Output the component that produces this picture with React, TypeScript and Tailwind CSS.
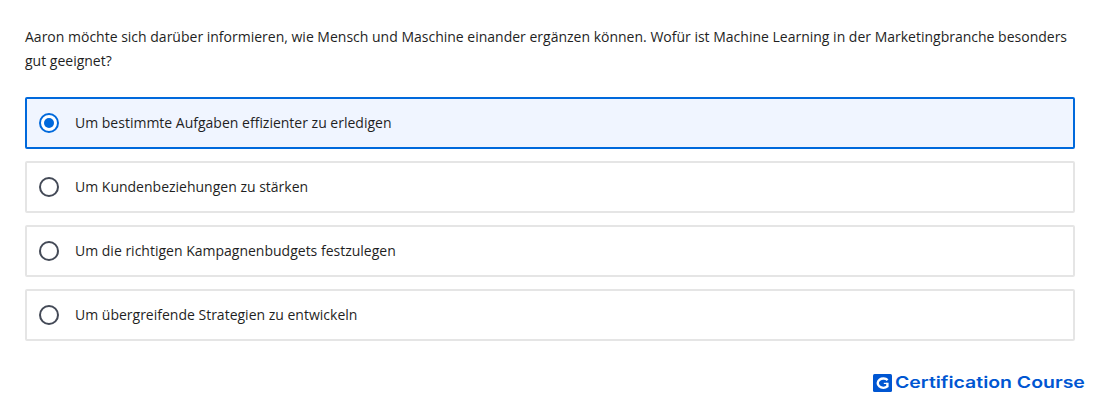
import { useState } from "react";

const options = [
  "Um bestimmte Aufgaben effizienter zu erledigen",
  "Um Kundenbeziehungen zu stärken",
  "Um die richtigen Kampagnenbudgets festzulegen",
  "Um übergreifende Strategien zu entwickeln",
];

function RadioMark({ checked }: { checked: boolean }) {
  return (
    <span
      className={`flex size-5 shrink-0 items-center justify-center rounded-full border-2 bg-white ${
        checked ? "border-[#0069dc]" : "border-[#444a57]"
      }`}
    >
      {checked && <span className="size-2.5 rounded-full bg-[#0069dc]" />}
    </span>
  );
}

function Brand() {
  return (
    <div className="flex h-[19px] items-center gap-[3px] text-[#0056d2]">
      <svg width="19" height="18" viewBox="0 0 19 18" aria-hidden="true">
        <rect width="19" height="18" rx="1.5" fill="#0056d2" />
        <path
          d="M14.6 6.1A5.6 4.7 0 1 0 14.4 12.4V8.7"
          fill="none"
          stroke="#fff"
          strokeWidth="2.4"
        />
        <path d="M10.8 9.4H14.4" stroke="#fff" strokeWidth="1.2" />
      </svg>
      <span className="w-[190px] origin-left scale-x-[1.215] font-['Inter',sans-serif] text-[16px] leading-[19px] font-semibold whitespace-nowrap">
        Certification Course
      </span>
    </div>
  );
}

export default function App() {
  const [selected, setSelected] = useState(0);

  return (
    <main className="h-[401px] overflow-hidden bg-white px-[25px] pt-[25px] font-['Open_Sans',sans-serif] text-sm leading-6 text-[#1f1f1f]">
      <p>
        Aaron möchte sich darüber informieren, wie Mensch und Maschine einander ergänzen können. Wofür ist Machine
        Learning in der Marketingbranche besonders gut geeignet?
      </p>
      <div role="radiogroup" className="mt-6 flex flex-col gap-3">
        {options.map((label, i) => (
          <button
            key={label}
            type="button"
            role="radio"
            aria-checked={i === selected}
            onClick={() => setSelected(i)}
            className={`flex h-[52px] items-center gap-4 rounded-xs border-2 px-3 text-left ${
              i === selected ? "border-[#0069dc] bg-[#f0f5ff]" : "border-[#e5e5e5] bg-white"
            }`}
          >
            <RadioMark checked={i === selected} />
            <span>{label}</span>
          </button>
        ))}
      </div>
      <div className="-mr-[10px] mt-8 flex justify-end">
        <Brand />
      </div>
    </main>
  );
}
